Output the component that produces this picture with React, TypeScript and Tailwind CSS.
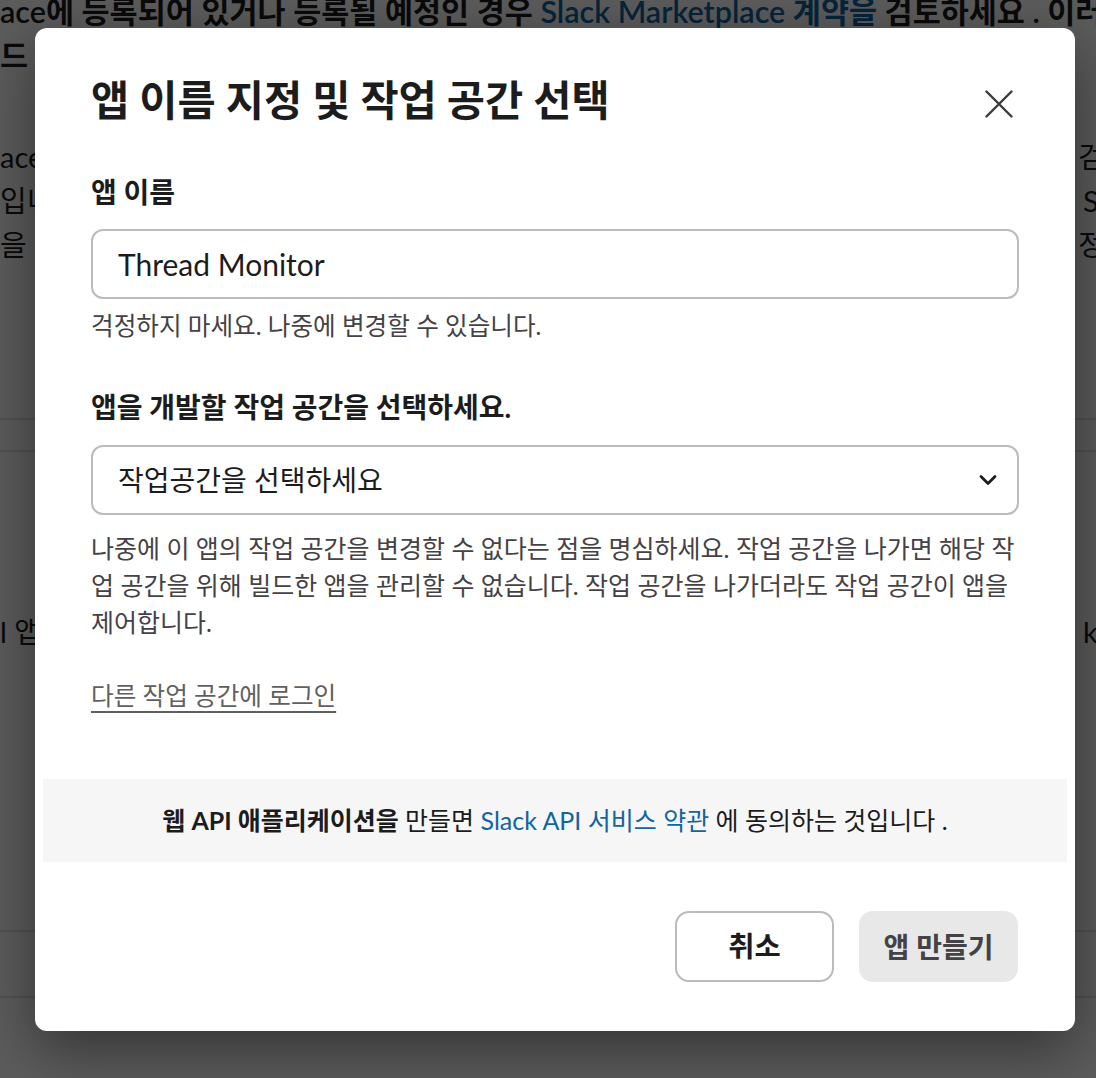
import React from "react"

const FONT = "font-['Lato','Noto_Sans_CJK_KR',sans-serif]"

function BackgroundPage() {
  return (
    <div className="flex h-full flex-col whitespace-nowrap text-[#1d1c1d]">
      <div className="-mt-[10px] flex h-[44px] items-center text-[30.5px] font-semibold">
        <span>ace에 등록되어 있거나 등록될 예정인 경우&nbsp;</span>
        <span className="text-[#1264a3]">Slack Marketplace 계약을</span>
        <span>&nbsp;검토하세요 . 이러한 조건이</span>
      </div>
      <div className="flex h-[44px] items-center text-[30.5px] font-semibold">
        <span>드 가이드라인을 확인하세요</span>
      </div>
      <div className="mt-[57px] flex flex-col text-[29px]">
        <div className="flex h-[44px] items-center">
          <span className="w-[1078px] shrink-0 overflow-hidden">ace에 등록된 앱은 별도의 검토 절차를 거치게 됩니다</span>
          <span>검토</span>
        </div>
        <div className="flex h-[44px] items-center">
          <span className="w-[1083px] shrink-0 overflow-hidden">입니다. 배포 전에 반드시 확인하세요</span>
          <span>Slack</span>
        </div>
        <div className="flex h-[44px] items-center">
          <span className="w-[1078px] shrink-0 overflow-hidden">을 제출하기 전에 정책을 읽어 주세요</span>
          <span>정책</span>
        </div>
      </div>
      <div className="mt-[151px] h-[34px] border-y-2 border-[#e4e4e4]" />
      <div className="mt-[158px] flex h-[44px] items-center text-[29px]">
        <span className="w-[1083px] shrink-0 overflow-hidden">l 앱을 만들고 관리하는 방법을 알아보세요</span>
        <span>k Marketplace</span>
      </div>
      <div className="mt-[276px] h-[68px] border-y-2 border-[#e4e4e4]" />
    </div>
  )
}

function CloseIcon() {
  return (
    <svg width="28" height="28" viewBox="0 0 28 28" fill="none" stroke="#3b3a3b" strokeWidth="2.4" strokeLinecap="round">
      <path d="M1.5 1.5 26.5 26.5M26.5 1.5 1.5 26.5" />
    </svg>
  )
}

function ChevronIcon() {
  return (
    <svg width="18" height="12" viewBox="0 0 18 12" fill="none" stroke="#1d1c1d" strokeWidth="2.8" strokeLinecap="round" strokeLinejoin="round">
      <path d="M2 2.5 9 9.5 16 2.5" />
    </svg>
  )
}

function CreateAppModal() {
  return (
    <div className="flex h-[1003px] w-[1040px] flex-col rounded-[12px] bg-white shadow-[0_18px_60px_rgba(0,0,0,0.45)]">
      <div className="flex items-center justify-between pl-[56px] pr-[62px] pt-[44px]">
        <h1 className="text-[41.5px] font-bold leading-[56px] text-[#1d1c1d]">
          앱 이름 지정 및 작업 공간 선택
        </h1>
        <button className="mt-[8px] flex h-[28px] w-[28px] items-center justify-center">
          <CloseIcon />
        </button>
      </div>

      <div className="flex flex-col px-[56px]">
        <label className="mt-[46px] text-[28px] font-bold leading-[36px] text-[#1d1c1d]">
          앱 이름
        </label>
        <div className="mt-[19px] flex h-[70px] items-center rounded-[12px] border-2 border-[#bcbbbc] px-[25px]">
          <span className="text-[30px] text-[#1d1c1d]">Thread Monitor</span>
        </div>
        <p className="mt-[9px] text-[24.6px] leading-[36px] text-[#454245]">
          걱정하지 마세요. 나중에 변경할 수 있습니다.
        </p>

        <label className="mt-[45px] text-[28px] font-bold leading-[36px] text-[#1d1c1d]">
          앱을 개발할 작업 공간을 선택하세요.
        </label>
        <div className="mt-[20px] flex h-[70px] items-center justify-between rounded-[12px] border-2 border-[#bcbbbc] pl-[25px] pr-[20px]">
          <span className="text-[28px] text-[#1d1c1d]">작업공간을 선택하세요</span>
          <ChevronIcon />
        </div>
        <p className="mt-[15px] text-[25px] leading-[37px] text-[#454245]">
          나중에 이 앱의 작업 공간을 변경할 수 없다는 점을 명심하세요. 작업 공간을 나가면 해당 작업 공간을 위해 빌드한 앱을 관리할 수 없습니다. 작업 공간을 나가더라도 작업 공간이 앱을 제어합니다.
        </p>
        <a className="mt-[37px] self-start text-[24.6px] leading-[36px] text-[#616061] underline decoration-[2px] underline-offset-[6px]">
          다른 작업 공간에 로그인
        </a>
      </div>

      <div className="mx-[8px] mt-[65px] flex h-[83px] items-center justify-center bg-[#f6f6f6] text-[25px] text-[#1d1c1d]">
        <span className="font-bold">웹 API 애플리케이션을</span>
        <span>&nbsp;만들면&nbsp;</span>
        <a className="text-[#1264a3]">Slack API 서비스 약관</a>
        <span>&nbsp;에 동의하는 것입니다 .</span>
      </div>

      <div className="mt-[49px] flex justify-end gap-[25px] px-[57px]">
        <button className="flex h-[71px] w-[159px] items-center justify-center rounded-[14px] border-2 border-[#bcbbbc] bg-white text-[28.5px] font-bold text-[#1d1c1d]">
          취소
        </button>
        <button className="flex h-[71px] w-[159px] items-center justify-center rounded-[14px] bg-[#e8e8e8] text-[28px] font-bold text-[#454245]">
          앱 만들기
        </button>
      </div>
    </div>
  )
}

export default function App() {
  return (
    <div className={`relative h-[1078px] w-[1096px] overflow-hidden bg-white ${FONT}`}>
      <BackgroundPage />
      <div className="absolute inset-0 bg-black/[0.64]" />
      <div className="absolute inset-0 flex pl-[35px] pt-[28px]">
        <CreateAppModal />
      </div>
    </div>
  )
}
